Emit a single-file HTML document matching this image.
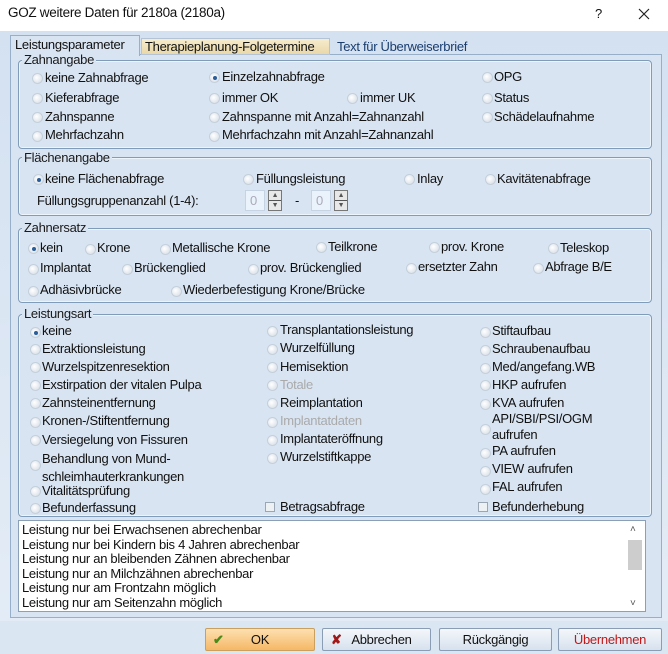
<!DOCTYPE html>
<html><head><meta charset="utf-8"><style>
*{margin:0;padding:0;box-sizing:border-box}
body{width:668px;height:654px;overflow:hidden;background:#dbe6f3;font-family:"Liberation Sans",Arial,sans-serif;font-size:13px;letter-spacing:-0.3px;color:#111;position:relative}
.t{position:absolute;white-space:nowrap;line-height:14px}
.r{position:absolute;width:11px;height:11px;border-radius:50%;border:1px solid #c4cfdb;background:radial-gradient(circle at 40% 40%,#fff,#dfe5ec 70%,#c6cfda);}
.r.on::after{content:"";position:absolute;left:2.5px;top:2.5px;width:4px;height:4px;border-radius:50%;background:#2a5d9a}
.g{position:absolute;border:1px solid #7f9db9;border-radius:4px;box-shadow:inset 0 0 0 1px #eef4fb}
.gl{position:absolute;background:#d8e4f2;padding:0 2px;line-height:13px;color:#1a1a1a}
.cb{position:absolute;width:10px;height:10px;border:1px solid #9aa6b3;background:#eef1f4}
.btn{position:absolute;top:628px;height:23px;border:1px solid #8a9db5;border-radius:2px;background:linear-gradient(#f4f7fb,#d7e1ee);text-align:center;line-height:21px;font-size:13px}
.dis{color:#aaa}
</style></head><body>
<div style="position:absolute;left:0;top:0;width:668px;height:31px;background:#fff"></div>
<div class="t" style="left:8px;top:6px;font-size:13.5px">GOZ weitere Daten für 2180a (2180a)</div>
<div class="t" style="left:595px;top:7px">?</div>
<svg style="position:absolute;left:638px;top:8px" width="12" height="12"><path d="M1 1L11 11M11 1L1 11" stroke="#222" stroke-width="1.2"/></svg>
<div style="position:absolute;left:0;top:31px;width:668px;height:590px;background:linear-gradient(#d4e1f1,#e3ecf6)"></div>
<div style="position:absolute;left:10px;top:54px;width:652px;height:564px;border:1px solid #98afc9;background:#d8e4f2"></div>
<div style="position:absolute;left:10px;top:35px;width:130px;height:21px;border:1px solid #98afc9;border-bottom:none;background:#d8e4f2"></div>
<div class="t" style="left:15px;top:38px">Leistungsparameter</div>
<div style="position:absolute;left:141px;top:38px;width:189px;height:17px;border:1px solid #b4c3d6;background:linear-gradient(#f6eccd,#ead8a8)"></div>
<div class="t" style="left:145px;top:40px">Therapieplanung-Folgetermine</div>
<div class="t" style="left:337px;top:40px;color:#1a3d6e">Text für Überweiserbrief</div>

<div class="g" style="left:18px;top:60px;width:634px;height:89px"></div>
<div class="gl" style="left:22px;top:53px">Zahnangabe</div>
<div class="r" style="left:32px;top:73px"></div><div class="t" style="left:45px;top:71px">keine Zahnabfrage</div>
<div class="r on" style="left:209px;top:72px"></div><div class="t" style="left:222px;top:70px">Einzelzahnabfrage</div>
<div class="r" style="left:482px;top:72px"></div><div class="t" style="left:494px;top:70px">OPG</div>
<div class="r" style="left:32px;top:93px"></div><div class="t" style="left:45px;top:91px">Kieferabfrage</div>
<div class="r" style="left:209px;top:93px"></div><div class="t" style="left:222px;top:91px">immer OK</div>
<div class="r" style="left:347px;top:93px"></div><div class="t" style="left:360px;top:91px">immer UK</div>
<div class="r" style="left:482px;top:93px"></div><div class="t" style="left:494px;top:91px">Status</div>
<div class="r" style="left:32px;top:112px"></div><div class="t" style="left:45px;top:110px">Zahnspanne</div>
<div class="r" style="left:209px;top:112px"></div><div class="t" style="left:222px;top:110px">Zahnspanne mit Anzahl=Zahnanzahl</div>
<div class="r" style="left:482px;top:112px"></div><div class="t" style="left:494px;top:110px">Schädelaufnahme</div>
<div class="r" style="left:32px;top:131px"></div><div class="t" style="left:45px;top:128px">Mehrfachzahn</div>
<div class="r" style="left:209px;top:131px"></div><div class="t" style="left:222px;top:128px">Mehrfachzahn mit Anzahl=Zahnanzahl</div>

<div class="g" style="left:18px;top:157px;width:634px;height:59px"></div>
<div class="gl" style="left:22px;top:151px">Flächenangabe</div>
<div class="r on" style="left:33px;top:174px"></div><div class="t" style="left:45px;top:172px">keine Flächenabfrage</div>
<div class="r" style="left:243px;top:174px"></div><div class="t" style="left:256px;top:172px">Füllungsleistung</div>
<div class="r" style="left:404px;top:174px"></div><div class="t" style="left:417px;top:172px">Inlay</div>
<div class="r" style="left:485px;top:174px"></div><div class="t" style="left:497px;top:172px">Kavitätenabfrage</div>
<div class="t" style="left:37px;top:194px">Füllungsgruppenanzahl (1-4):</div>
<div style="position:absolute;left:245px;top:190px;width:20px;height:21px;background:#eaf2fb;border:1px solid #c5d3e3;color:#aab;padding-left:4px;line-height:19px">0</div>
<div style="position:absolute;left:268px;top:190px;width:14px;height:21px;border:1px solid #777;background:linear-gradient(#e8e8e8 48%,#555 48%,#555 52%,#e8e8e8 52%);font-size:7px;line-height:10px;text-align:center;color:#555">▲<br>▼</div>
<div class="t" style="left:295px;top:194px">-</div>
<div style="position:absolute;left:311px;top:190px;width:20px;height:21px;background:#eaf2fb;border:1px solid #c5d3e3;color:#aab;padding-left:4px;line-height:19px">0</div>
<div style="position:absolute;left:334px;top:190px;width:14px;height:21px;border:1px solid #777;background:linear-gradient(#e8e8e8 48%,#555 48%,#555 52%,#e8e8e8 52%);font-size:7px;line-height:10px;text-align:center;color:#555">▲<br>▼</div>

<div class="g" style="left:18px;top:228px;width:634px;height:75px"></div>
<div class="gl" style="left:22px;top:221px">Zahnersatz</div>
<div class="r on" style="left:28px;top:243px"></div><div class="t" style="left:40px;top:241px">kein</div>
<div class="r" style="left:85px;top:244px"></div><div class="t" style="left:97px;top:241px">Krone</div>
<div class="r" style="left:160px;top:244px"></div><div class="t" style="left:172px;top:241px">Metallische Krone</div>
<div class="r" style="left:316px;top:242px"></div><div class="t" style="left:328px;top:240px">Teilkrone</div>
<div class="r" style="left:429px;top:242px"></div><div class="t" style="left:441px;top:240px">prov. Krone</div>
<div class="r" style="left:548px;top:243px"></div><div class="t" style="left:560px;top:241px">Teleskop</div>
<div class="r" style="left:28px;top:264px"></div><div class="t" style="left:40px;top:261px">Implantat</div>
<div class="r" style="left:122px;top:264px"></div><div class="t" style="left:134px;top:261px">Brückenglied</div>
<div class="r" style="left:248px;top:264px"></div><div class="t" style="left:260px;top:261px">prov. Brückenglied</div>
<div class="r" style="left:406px;top:263px"></div><div class="t" style="left:418px;top:260px">ersetzter Zahn</div>
<div class="r" style="left:533px;top:263px"></div><div class="t" style="left:545px;top:260px">Abfrage B/E</div>
<div class="r" style="left:28px;top:286px"></div><div class="t" style="left:40px;top:283px">Adhäsivbrücke</div>
<div class="r" style="left:171px;top:286px"></div><div class="t" style="left:183px;top:283px">Wiederbefestigung Krone/Brücke</div>

<div class="g" style="left:18px;top:314px;width:634px;height:203px"></div>
<div class="gl" style="left:22px;top:307px">Leistungsart</div>
<div class="r on" style="left:30px;top:327px"></div><div class="t" style="left:42px;top:324px">keine</div>
<div class="r" style="left:30px;top:344px"></div><div class="t" style="left:42px;top:342px">Extraktionsleistung</div>
<div class="r" style="left:30px;top:362px"></div><div class="t" style="left:42px;top:360px">Wurzelspitzenresektion</div>
<div class="r" style="left:30px;top:380px"></div><div class="t" style="left:42px;top:378px">Exstirpation der vitalen Pulpa</div>
<div class="r" style="left:30px;top:398px"></div><div class="t" style="left:42px;top:396px">Zahnsteinentfernung</div>
<div class="r" style="left:30px;top:417px"></div><div class="t" style="left:42px;top:414px">Kronen-/Stiftentfernung</div>
<div class="r" style="left:30px;top:435px"></div><div class="t" style="left:42px;top:433px">Versiegelung von Fissuren</div>
<div class="r" style="left:30px;top:460px"></div><div class="t" style="left:42px;top:450px;line-height:18px">Behandlung von Mund-<br>schleimhauterkrankungen</div>
<div class="r" style="left:30px;top:486px"></div><div class="t" style="left:42px;top:484px">Vitalitätsprüfung</div>
<div class="r" style="left:30px;top:503px"></div><div class="t" style="left:42px;top:501px">Befunderfassung</div>
<div class="r" style="left:267px;top:326px"></div><div class="t" style="left:280px;top:323px">Transplantationsleistung</div>
<div class="r" style="left:267px;top:344px"></div><div class="t" style="left:280px;top:341px">Wurzelfüllung</div>
<div class="r" style="left:267px;top:362px"></div><div class="t" style="left:280px;top:360px">Hemisektion</div>
<div class="r" style="left:267px;top:380px"></div><div class="t dis" style="left:280px;top:378px">Totale</div>
<div class="r" style="left:267px;top:398px"></div><div class="t" style="left:280px;top:396px">Reimplantation</div>
<div class="r" style="left:267px;top:417px"></div><div class="t dis" style="left:280px;top:414px">Implantatdaten</div>
<div class="r" style="left:267px;top:435px"></div><div class="t" style="left:280px;top:432px">Implantateröffnung</div>
<div class="r" style="left:267px;top:453px"></div><div class="t" style="left:280px;top:450px">Wurzelstiftkappe</div>
<div class="cb" style="left:265px;top:502px"></div><div class="t" style="left:280px;top:500px">Betragsabfrage</div>
<div class="r" style="left:480px;top:327px"></div><div class="t" style="left:492px;top:324px">Stiftaufbau</div>
<div class="r" style="left:480px;top:345px"></div><div class="t" style="left:492px;top:342px">Schraubenaufbau</div>
<div class="r" style="left:480px;top:363px"></div><div class="t" style="left:492px;top:360px">Med/angefang.WB</div>
<div class="r" style="left:480px;top:380px"></div><div class="t" style="left:492px;top:378px">HKP aufrufen</div>
<div class="r" style="left:480px;top:399px"></div><div class="t" style="left:492px;top:396px">KVA aufrufen</div>
<div class="r" style="left:480px;top:424px"></div><div class="t" style="left:492px;top:411px;line-height:16px">API/SBI/PSI/OGM<br>aufrufen</div>
<div class="r" style="left:480px;top:448px"></div><div class="t" style="left:492px;top:444px">PA aufrufen</div>
<div class="r" style="left:480px;top:466px"></div><div class="t" style="left:492px;top:462px">VIEW aufrufen</div>
<div class="r" style="left:480px;top:484px"></div><div class="t" style="left:492px;top:480px">FAL aufrufen</div>
<div class="cb" style="left:478px;top:502px"></div><div class="t" style="left:492px;top:500px">Befunderhebung</div>

<div style="position:absolute;left:18px;top:520px;width:628px;height:92px;background:#fff;border:1px solid #8aa0b8"></div>
<div class="t" style="left:22px;top:523px;line-height:14.6px">Leistung nur bei Erwachsenen abrechenbar<br>Leistung nur bei Kindern bis 4 Jahren abrechenbar<br>Leistung nur an bleibenden Zähnen abrechenbar<br>Leistung nur an Milchzähnen abrechenbar<br>Leistung nur am Frontzahn möglich<br>Leistung nur am Seitenzahn möglich</div>
<div style="position:absolute;left:628px;top:540px;width:14px;height:30px;background:#cdcdcd"></div>
<div class="t" style="left:630px;top:523px;font-size:10px;color:#555">˄</div>
<div class="t" style="left:630px;top:597px;font-size:10px;color:#555">˅</div>

<div class="btn" style="left:205px;width:110px;background:linear-gradient(#fde0b0,#f5b865);border-color:#c9a060"><span style="position:absolute;left:7px;color:#4a8a1a;font-weight:bold">✔</span>OK</div>
<div class="btn" style="left:322px;width:109px"><span style="position:absolute;left:8px;color:#a01818;font-weight:bold">✘</span>&nbsp;&nbsp;&nbsp;Abbrechen</div>
<div class="btn" style="left:439px;width:113px">Rückgängig</div>
<div class="btn" style="left:558px;width:104px;color:#c01818">Übernehmen</div>
</body></html>
